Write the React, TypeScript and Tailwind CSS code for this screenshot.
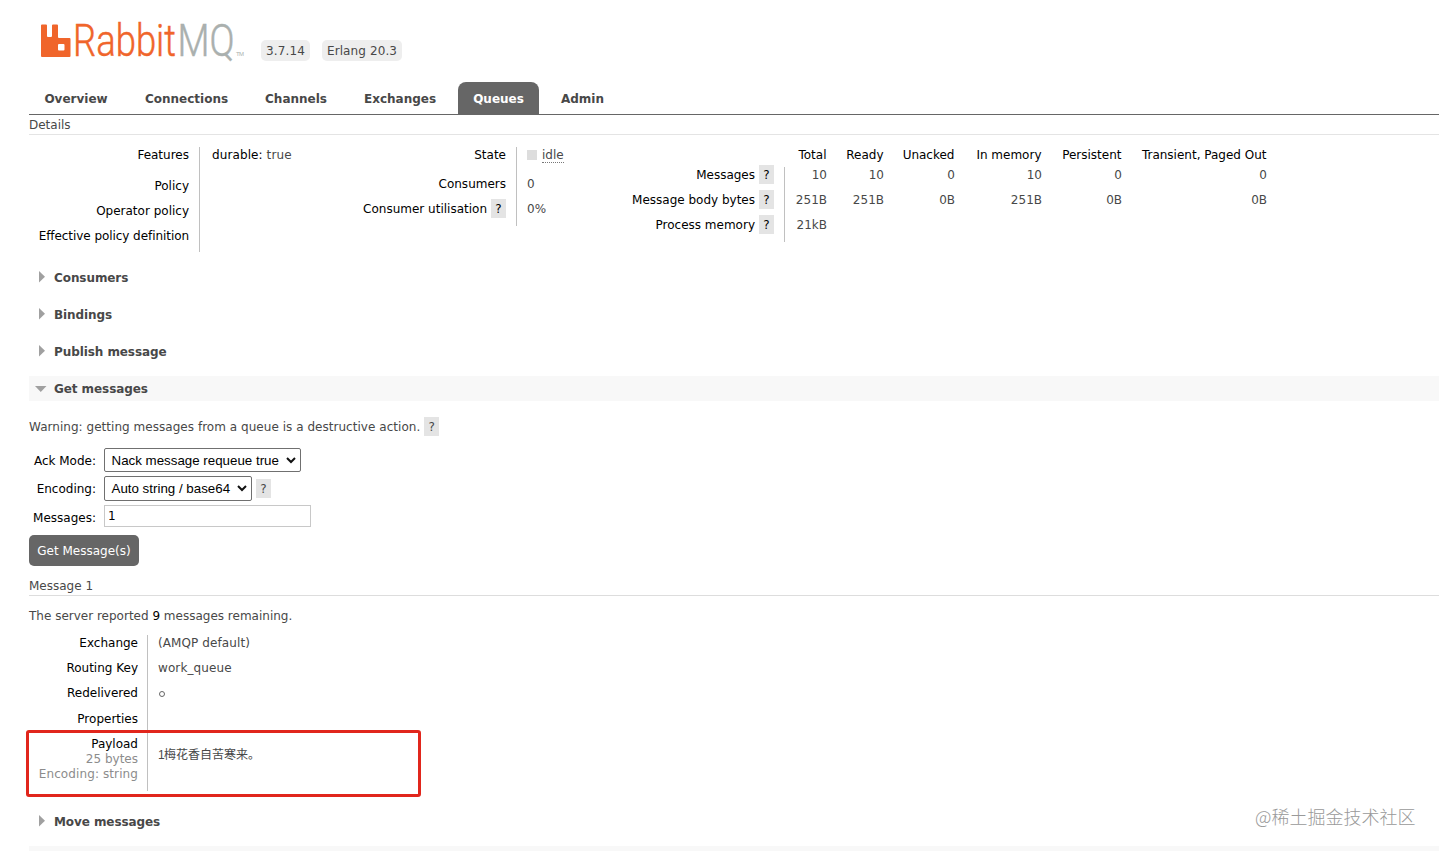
import type { ReactNode } from 'react';
import { clsx } from 'clsx';

const TABS = [
  { label: 'Overview', width: 'w-[94px]' },
  { label: 'Connections', width: 'w-[113px]' },
  { label: 'Channels', width: 'w-[92px]' },
  { label: 'Exchanges', width: 'w-[102px]' },
  { label: 'Queues', width: 'w-[81px]', active: true },
  { label: 'Admin', width: 'w-[73px]' },
];

const STAT_COLUMNS = [
  { label: 'Total', width: 'w-[42px]', values: ['10', '251B', '21kB'] },
  { label: 'Ready', width: 'w-[57px]', values: ['10', '251B', ''] },
  { label: 'Unacked', width: 'w-[71px]', values: ['0', '0B', ''] },
  { label: 'In memory', width: 'w-[87px]', values: ['10', '251B', ''] },
  { label: 'Persistent', width: 'w-[80px]', values: ['0', '0B', ''] },
  { label: 'Transient, Paged Out', width: 'w-[145px]', values: ['0', '0B', ''] },
];

function Logo() {
  return (
    <svg width="210" height="64" viewBox="0 0 210 64" className="block">
      <path
        fill="#f0652b"
        fillRule="evenodd"
        d="M2 16.500h4q1 0 1 1V28q0 1 1 1h3q1 0 1-1V17.500q0-1 1-1h4q1 0 1 1V29q0 1 1 1H29.500q1 0 1 1V48q0 1-1 1H2q-1 0-1-1V17.500q0-1 1-1zM19 36q-1 0-1 1v4.500q0 1 1 1h4.500q1 0 1-1V37q0-1-1-1z"
      />
      <g fontFamily="Roboto, 'Open Sans', sans-serif" fontWeight="300" fontSize="44.500" strokeWidth="0.500">
        <text
          x="33"
          y="48"
          fill="#f0652b"
          stroke="#f0652b"
          textLength="103"
          lengthAdjust="spacingAndGlyphs"
        >
          Rabbit
        </text>
        <text
          x="137.500"
          y="48"
          fill="#aab0ae"
          stroke="#aab0ae"
          textLength="57"
          lengthAdjust="spacingAndGlyphs"
        >
          MQ
        </text>
      </g>
      <text
        x="196"
        y="48"
        fontFamily="Liberation Sans, Arial, sans-serif"
        fontSize="6"
        fill="#aab0ae"
        textLength="8"
      >
        TM
      </text>
    </svg>
  );
}

function Help() {
  return (
    <span className="flex h-[19px] w-[15px] shrink-0 items-center justify-center bg-[#e4e4e4] text-[12px]">
      ?
    </span>
  );
}

function Version({ children, className }: { children: ReactNode; className: string }) {
  return (
    <span
      className={clsx(
        'flex h-[21px] items-center justify-center rounded-[5px] bg-[#eeeeee] text-[12px] tracking-[0.1px]',
        className,
      )}
    >
      {children}
    </span>
  );
}

function Section({ title, open }: { title: string; open?: boolean }) {
  return (
    <h2
      className={clsx(
        'flex h-[25px] items-center text-[12px] font-bold tracking-[-0.08px]',
        open && 'bg-[#f8f8f8]',
      )}
    >
      <svg width="25" height="25" className="shrink-0" fill="#a0a0a0">
        {open ? <path d="M6 10h11.500l-5.750 6z" /> : <path d="M10 6v11.500l6-5.750z" />}
      </svg>
      {title}
    </h2>
  );
}

function Fact({
  label,
  help,
  height,
}: {
  label: string;
  help?: boolean;
  height: string;
}) {
  return (
    <div className={clsx('flex items-center justify-end gap-1 whitespace-nowrap text-black', height)}>
      {label}
      {help && <Help />}
    </div>
  );
}

function Select({ value, className }: { value: string; className: string }) {
  return (
    <div
      className={clsx(
        'flex items-center justify-between rounded-[2px] border border-[#707070] pr-1 pl-[6.500px] font-["Liberation_Sans",Arial,sans-serif] text-[13.333px] tracking-normal whitespace-nowrap text-black',
        className,
      )}
    >
      {value}
      <svg width="10" height="7" fill="none" stroke="#111" strokeWidth="2">
        <path d="M1 1l4 4 4-4" />
      </svg>
    </div>
  );
}

function Details() {
  return (
    <div className="flex h-[130px] pt-3">
      <div className="w-[161px] pr-[1px]">
        <Fact label="Features" height="h-[15px]" />
        <div className="h-[11px]" />
        <Fact label="Policy" height="h-[25px]" />
        <Fact label="Operator policy" height="h-[25px]" />
        <div className="tracking-[-0.06px]">
          <Fact label="Effective policy definition" height="h-[25px]" />
        </div>
      </div>
      <div className="ml-[9px] h-[105px] w-[130px] border-l border-[#c0c0c0] pl-3 leading-[16px] tracking-[0.1px]">
        <span className="text-black">durable:</span> true
      </div>

      <div className="ml-4 w-[161px]">
        <Fact label="State" height="h-[15px]" />
        <div className="h-[9px]" />
        <Fact label="Consumers" height="h-[25px]" />
        <Fact label="Consumer utilisation" help height="h-[25px]" />
      </div>
      <div className="ml-[10px] h-[79px] w-[80px] border-l border-[#c0c0c0] pl-[10px]">
        <div className="flex h-[15px] items-center gap-[5px]">
          <span className="size-[10px] bg-[#dddddd]" />
          <span className="mt-px h-4 border-b border-dotted border-[#777] leading-[16px]">idle</span>
        </div>
        <div className="h-[10px]" />
        <div className="leading-[25px]">0</div>
        <div className="leading-[25px]">0%</div>
      </div>

      <div className="ml-4 w-[162px] pt-[15px]">
        <Fact label="Messages" help height="h-[25px]" />
        <Fact label="Message body bytes" help height="h-[25px]" />
        <Fact label="Process memory" help height="h-[25px]" />
      </div>
      <div className="ml-[10px]">
        <div className="flex h-[20px] pl-[0.500px] leading-[17px] text-black">
          {STAT_COLUMNS.map((c) => (
            <div key={c.label} className={clsx('text-right whitespace-nowrap', c.width)}>
              {c.label}
            </div>
          ))}
        </div>
        <div className="flex h-[75px] border-l border-[#c0c0c0]">
          {STAT_COLUMNS.map((c) => (
            <div key={c.label} className={clsx('-mt-1 text-right leading-[25px]', c.width)}>
              {c.values.map((v, i) => (
                <div key={i}>{v}</div>
              ))}
            </div>
          ))}
        </div>
      </div>
    </div>
  );
}

function GetMessages() {
  return (
    <div>
      <div className="mt-4 flex h-[19px] items-center gap-1">
        <span className="tracking-[0.035px]">
          Warning: getting messages from a queue is a destructive action.
        </span>
        <Help />
      </div>
      <div className="mt-3 flex h-[24px] items-center gap-2">
        <div className="w-[67px] pt-px text-right text-black">Ack Mode:</div>
        <Select value="Nack message requeue true" className="h-[24px] w-[197px] pt-px" />
      </div>
      <div className="mt-1 flex h-[25px] items-center">
        <div className="mr-2 w-[67px] text-right text-black">Encoding:</div>
        <Select value="Auto string / base64" className="mr-1 h-[25px] w-[148px]" />
        <Help />
      </div>
      <div className="mt-1 flex h-[22px] items-center gap-2">
        <div className="w-[67px] pt-[3px] text-right text-black">Messages:</div>
        <div className="flex h-[22px] w-[207px] items-center border border-[#c8c8c8] pl-[3px] text-black">
          1
        </div>
      </div>
      <button className="mt-2 flex h-[31px] w-[110px] items-center justify-center rounded-[5px] bg-[#666666] text-white">
        Get Message(s)
      </button>
    </div>
  );
}

function Message() {
  return (
    <div>
      <h3 className="mt-[10px] h-[20px] border-b border-[#dddddd] leading-[20px]">Message 1</h3>
      <p className="mt-[13px] leading-[15px]">
        The server reported <span className="text-black">9</span> messages remaining.
      </p>
      <div className="relative mt-[11px] flex h-[156px]">
        <div className="w-[109px]">
          <Fact label="Exchange" height="h-[15px]" />
          <div className="h-[5px]" />
          <Fact label="Routing Key" height="h-[25px]" />
          <Fact label="Redelivered" height="h-[25px]" />
          <Fact label="Properties" height="h-[27px]" />
          <div className="pt-[5px] text-right leading-[15px] whitespace-nowrap text-[#8c8c8c]">
            <div className="text-black">Payload</div>
            <div>25 bytes</div>
            <div className="tracking-[0.1px]">Encoding: string</div>
          </div>
        </div>
        <div className="ml-[9px] border-l border-[#c0c0c0] pl-[10px]">
          <div className="pt-px leading-[15px] tracking-[0.1px]">(AMQP default)</div>
          <div className="mt-[5px] leading-[25px] tracking-[0.1px]">work_queue</div>
          <div className="flex h-[25px] items-center pt-[1px]">
            <span className="ml-[1px] size-[6px] rounded-full border border-[#666]" />
          </div>
          <div className="mt-[41px] font-['Liberation_Sans','Noto_Sans_CJK_SC',sans-serif] text-[12px] leading-[16px] tracking-normal">
            <span className="inline-block w-[6px]">1</span>
            <span lang="zh-CN">梅花香自苦寒来。</span>
          </div>
        </div>
        {/* Highlight drawn over the payload row */}
        <div className="absolute top-[95px] -left-[3px] h-[67px] w-[395px] rounded-[3px] border-3 border-[#e1261c]" />
      </div>
    </div>
  );
}

export default function App() {
  return (
    <div className="relative h-[851px] w-[1439px] overflow-hidden bg-white pl-[29px] font-['DejaVu_Sans',Verdana,sans-serif] text-[12px] text-[#484848]">
      <header className="flex h-[82px]">
        <div className="w-[232px] pt-2 pl-[11px]">
          <Logo />
        </div>
        <div className="flex gap-3 pt-[40px]">
          <Version className="w-[49px]">3.7.14</Version>
          <Version className="w-[80px]">Erlang 20.3</Version>
        </div>
      </header>
      <nav className="flex h-[33px] gap-[7px] border-b border-[#666666] text-[12px] font-bold">
        {TABS.map((t) => (
          <a
            key={t.label}
            className={clsx(
              'flex h-8 items-center justify-center pt-px',
              t.width,
              t.active && 'rounded-t-[8px] bg-[#666666] text-white',
            )}
          >
            {t.label}
          </a>
        ))}
      </nav>
      <h3 className="h-[20px] border-b border-[#e4e4e4] leading-[20px]">Details</h3>
      <Details />
      <div className="flex flex-col gap-3">
        <Section title="Consumers" />
        <Section title="Bindings" />
        <Section title="Publish message" />
        <Section title="Get messages" open />
      </div>
      <GetMessages />
      <Message />
      <div className="mt-[18px]">
        <Section title="Move messages" />
      </div>
      <div className="mt-3 h-[25px] bg-[#f8f8f8]" />
      <div className="absolute top-[804px] left-[1255px] font-['Noto_Sans_CJK_SC',sans-serif] text-[18px] leading-[24px] font-light whitespace-nowrap text-[#999999]">
        @稀土掘金技术社区
      </div>
    </div>
  );
}
